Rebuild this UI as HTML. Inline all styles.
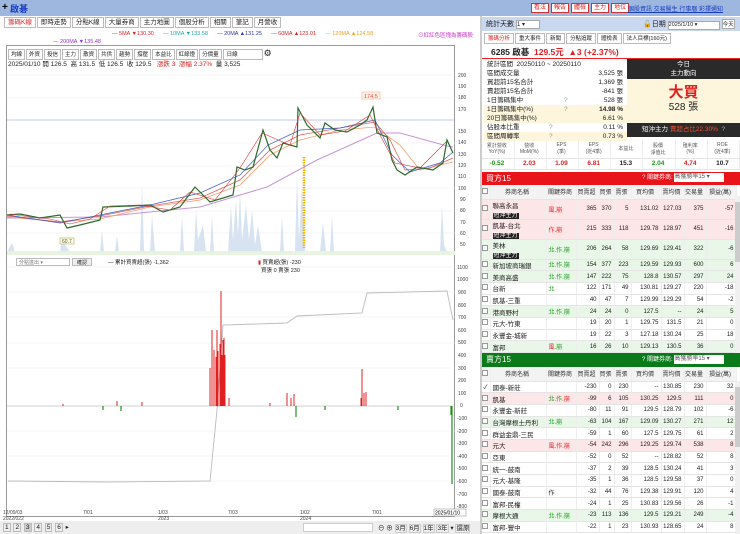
<!DOCTYPE html>
<html><head><meta charset="utf-8">
<style>
*{box-sizing:border-box;margin:0;padding:0}
body{width:740px;height:534px;overflow:hidden;background:#fff;font-family:"Liberation Sans","Noto Sans CJK TC",sans-serif;font-size:7px;color:#222;position:relative}
.a{position:absolute}
.top{left:0;top:0;width:740px;height:16px;background:#9db7df}
.tab{display:inline-block;border:1px solid #bbb;background:#fff;padding:0 3px;height:11px;line-height:10px;font-size:6.5px;margin-right:1px}
.btn{display:inline-block;border:1px solid #c33;background:#fff;color:#d22;padding:0 2px;height:10px;line-height:9px;font-size:6px;margin-right:2px}
table{border-collapse:collapse;table-layout:fixed;position:absolute;left:482px;width:254px}
td{font-size:6px;height:11.7px;border-bottom:1px solid #e5e5e5;border-right:1px solid #eee;text-align:right;padding-right:2px;white-space:nowrap;overflow:hidden}
td.n{text-align:left;padding-left:2px;font-size:6.5px}
td.k{text-align:left;padding-left:2px}
tr.p td{background:#fde6e8}tr.g td{background:#e8f7e8}
tr.h td{background:#f3f3f3;text-align:center;height:14px;color:#333}
.cb{width:6px;height:6px;border:1px solid #999;display:inline-block;background:#fff}
.dz{background:#222;color:#fff;padding:0 1px;font-size:6px}
.r{color:#e02020}.gr{color:#1a9a1a}
.st div{height:9px;line-height:9px;font-size:6.5px;position:relative;padding-left:3px}
.st span{position:absolute;right:4px}
</style></head><body>
<div class="a top"></div>
<div class="a" style="left:2px;top:2px;font-size:10px;color:#000;font-weight:bold">+</div>
<div class="a" style="left:10px;top:2px;font-size:9px;color:#1a3fc0;font-weight:bold">啟碁</div>
<div class="a" style="left:531px;top:3px;white-space:nowrap"><span class="btn">看法</span><span class="btn">報告</span><span class="btn">體檢</span><span class="btn">主力</span><span class="btn">地位</span></div>
<div class="a" style="left:628px;top:4px;font-size:6px;color:#1a3fc0;text-decoration:underline;white-space:nowrap">個股資訊 交易醫生 行事曆 彩擇通知</div>

<!-- left tabs -->
<div class="a" style="left:4px;top:17px;white-space:nowrap"><span class="tab" style="color:#d22">籌碼K線</span><span class="tab">即時走勢</span><span class="tab">分點K線</span><span class="tab">大量券商</span><span class="tab">主力地圖</span><span class="tab">個股分析</span><span class="tab">相關</span><span class="tab">筆記</span><span class="tab">月營收</span></div>
<div class="a" style="left:112px;top:31px;font-size:5.5px;white-space:nowrap"><span class="r">— 5MA ▼130.30</span>&nbsp;&nbsp;&nbsp;&nbsp;&nbsp; <span style="color:#2aa">— 10MA ▼133.58</span>&nbsp;&nbsp;&nbsp;&nbsp;&nbsp; <span style="color:#33a">— 20MA ▲131.25</span>&nbsp;&nbsp;&nbsp;&nbsp;&nbsp; <span class="r">— 60MA ▲123.01</span>&nbsp;&nbsp;&nbsp;&nbsp;&nbsp; <span style="color:#e9a020">— 120MA ▲124.58</span></div>
<div class="a" style="left:418px;top:31px;font-size:5.5px;color:#c3c;white-space:nowrap">⊙紅紅色區塊為籌碼股</div>
<div class="a" style="left:53px;top:39px;font-size:5.5px;color:#93c">— 200MA ▼135.48</div>
<div class="a" style="left:6px;top:45px;width:449px;height:472px;border:1px solid #999"></div>
<div class="a" style="left:8px;top:48px;white-space:nowrap"><span class="tab" style="font-size:5.5px;padding:0 2px">均線</span><span class="tab" style="font-size:5.5px;padding:0 2px">外資</span><span class="tab" style="font-size:5.5px;padding:0 2px">投信</span><span class="tab" style="font-size:5.5px;padding:0 2px">主力</span><span class="tab" style="font-size:5.5px;padding:0 2px">散資</span><span class="tab" style="font-size:5.5px;padding:0 2px">共供</span><span class="tab" style="font-size:5.5px;padding:0 2px">趨勢</span><span class="tab" style="font-size:5.5px;padding:0 2px">撐壓</span><span class="tab" style="font-size:5.5px;padding:0 2px">本益比</span><span class="tab" style="font-size:5.5px;padding:0 2px">紅綠燈</span><span class="tab" style="font-size:5.5px;padding:0 2px">分價量</span><span class="tab" style="font-size:5.5px;width:40px">日線</span><span style="font-size:9px">⚙</span></div>
<div class="a" style="left:8px;top:58px;font-size:6.5px;white-space:nowrap">2025/01/10 開 126.5 &nbsp;高 131.5 &nbsp;低 126.5 &nbsp;收 129.5 &nbsp;&nbsp;<span class="r">漲跌 3 &nbsp;漲幅 2.37%</span> &nbsp;量 3,525</div>

<svg class="a" style="left:0;top:0" width="480" height="534">
<g stroke="#eee" stroke-width="0.6">
<line x1="7" y1="75" x2="455" y2="75"/><line x1="7" y1="98" x2="455" y2="98"/><line x1="7" y1="143" x2="455" y2="143"/><line x1="7" y1="166" x2="455" y2="166"/><line x1="7" y1="188" x2="455" y2="188"/><line x1="7" y1="211" x2="455" y2="211"/><line x1="7" y1="233" x2="455" y2="233"/>
<line x1="7" y1="267" x2="455" y2="267"/><line x1="7" y1="292" x2="455" y2="292"/><line x1="7" y1="317" x2="455" y2="317"/><line x1="7" y1="343" x2="455" y2="343"/><line x1="7" y1="368" x2="455" y2="368"/><line x1="7" y1="431" x2="455" y2="431"/><line x1="7" y1="456" x2="455" y2="456"/><line x1="7" y1="481" x2="455" y2="481"/>
</g>
<line x1="7" y1="120" x2="455" y2="120" stroke="#aab4dd" stroke-width="0.7"/>
<path d="M7 252 L12 243 L15 252 L60 252 L62 240 L70 252 L100 252 L102 230 L104 252 L115 252 L117 235 L119 252 L140 252 L142 183 L144 252 L150 252 L152 215 L155 252 L180 252 L182 215 L184 252 L194 252 L196 210 L198 240 L203 225 L206 252 L210 252 L212 215 L214 252 L228 252 L231 205 L233 240 L236 200 L238 235 L240 190 L242 240 L246 205 L249 240 L252 210 L255 245 L258 225 L262 252 L270 252 L280 252 L282 215 L284 252 L295 252 L297 175 L299 240 L302 185 L305 252 L320 252 L323 222 L326 252 L330 252 L332 215 L334 252 L440 252 L442 205 L444 245 L447 252 Z" fill="#d7e3f0"/>
<polyline fill="none" stroke="#c596d6" stroke-width="1" points="7,218 100,217 200,207 267,187 317,160 377,133 400,133 447,146 453,147"/>
<polyline fill="none" stroke="#f0a070" stroke-width="0.8" points="7,217 60,222 100,219 150,207 200,200 240,185 270,155 300,140 340,130 375,127 400,145 420,170 440,165 453,162"/>
<polyline fill="none" stroke="#e06060" stroke-width="0.8" points="7,216 60,222 100,216 150,206 200,198 240,180 270,150 300,135 340,128 375,122 390,140 405,170 430,168 453,158"/>
<polyline fill="none" stroke="#4060c0" stroke-width="0.7" points="7,215 60,223 100,215 150,205 200,193 240,175 268,145 300,130 340,128 375,120 392,155 410,172 440,163 453,152"/>
<polyline fill="none" stroke="#2a6a2a" stroke-width="1.2" points="7,215 20,214 40,218 60,215 67,228 80,225 100,220 103,207 130,206 150,205 163,212 180,207 195,187 205,197 210,202 233,195 237,167 245,170 253,167 263,130 270,150 277,158 283,143 297,147 298,108 307,125 320,138 325,123 335,130 347,132 360,125 367,120 373,107 377,133 387,137 392,160 397,170 405,175 417,167 433,170 443,163 447,140 453,153"/>
<polyline fill="none" stroke="#d33" stroke-width="0.6" points="10,214 30,217 50,219 70,224 90,219 110,206 140,205 170,210 190,192 215,200 240,168 262,133 290,145 300,113 320,135 345,131 370,115 380,135 395,163 420,168 446,142"/>
<line x1="304" y1="157" x2="304" y2="248" stroke="#f5b000" stroke-width="2.5" stroke-dasharray="1.5 1"/>
<rect x="60" y="238" width="14" height="6" fill="#ffffe0" stroke="#cc9"/><text x="62" y="243" font-size="5" fill="#555">60.7</text>
<rect x="362" y="92" width="18" height="7" fill="#fff3e6" stroke="#fcb"/><text x="364" y="98" font-size="5.5" fill="#e44">174.5</text>
<rect x="7" y="251" width="448" height="4" fill="#e8f4e0"/>
<g font-size="5" fill="#444">
<text x="458" y="77">200</text><text x="458" y="88">190</text><text x="458" y="99">180</text><text x="458" y="111">170</text><text x="458" y="133">150</text><text x="458" y="144">140</text><text x="458" y="156">130</text><text x="458" y="167">120</text><text x="458" y="178">110</text><text x="458" y="190">100</text><text x="460" y="201">90</text><text x="460" y="212">80</text><text x="460" y="224">70</text><text x="460" y="235">60</text><text x="460" y="246">50</text>
<text x="457" y="269">1100</text><text x="457" y="281">1000</text><text x="458" y="294">900</text><text x="458" y="307">800</text><text x="458" y="319">700</text><text x="458" y="332">600</text><text x="458" y="344">500</text><text x="458" y="357">400</text><text x="458" y="370">300</text><text x="458" y="382">200</text><text x="458" y="395">100</text><text x="460" y="407">0</text><text x="457" y="420">-100</text><text x="457" y="433">-200</text><text x="457" y="445">-300</text><text x="457" y="458">-400</text><text x="457" y="470">-500</text><text x="457" y="483">-600</text><text x="457" y="496">-700</text><text x="457" y="508">-800</text>
<text x="3" y="514">12/09/03</text><text x="3" y="520">2022/022</text><text x="83" y="514">7/01</text><text x="158" y="514">1/03</text><text x="158" y="520">2023</text><text x="228" y="514">7/03</text><text x="300" y="514">1/02</text><text x="300" y="520">2024</text><text x="372" y="514">7/01</text>
</g>
<rect x="434" y="509" width="32" height="7" fill="#fff" stroke="#888" stroke-width="0.5"/><text x="435" y="514.5" font-size="5">2025/01/10</text>
<polyline fill="none" stroke="#bbb" stroke-width="0.9" points="8,481 107,482 210,481 217,410 223,325 287,323 297,316 362,313 367,293 447,291 453,320"/>
<line x1="7" y1="406" x2="452" y2="406" stroke="#888" stroke-width="0.4"/>
<path d="M210 406V368M212 406V330M214 406V350M216 406V357M217 406V330M218 406V351M220 406V344M221 406V291M222 406V355M223 406V340M224 406V338M225 406V355M229 406V398M287 406V393M291 406V398M294 406V394M361 406V398M362 406V369M364 406V393M366 406V392M117 406V401M142 406V402M63 406V404M270 406V403" stroke="#e02020" stroke-width="1"/>
<path d="M296 406V417M121 406V411M103 406V410M452 406V484M451 406V415M398 406V410M325 406V410" stroke="#209020" stroke-width="1.2"/>
</svg>
<div class="a" style="left:16px;top:258px;width:54px;height:8px;border:1px solid #bbb;font-size:5px;color:#777;padding-left:2px">分點進出 ▾</div>
<div class="a" style="left:72px;top:258px;width:20px;height:8px;background:#eee;border:1px solid #bbb;font-size:5px;text-align:center">確認</div>
<div class="a" style="left:108px;top:258px;font-size:5.5px;white-space:nowrap">— 累計買賣超(張) -1,362</div>
<div class="a" style="left:258px;top:258px;font-size:5.5px;white-space:nowrap"><span class="r">▮</span> 買賣超(張) -230<br>&nbsp;&nbsp;買張 0 賣張 230</div>
<div class="a" style="left:0;top:521px;width:480px;height:13px;background:#eee"></div>
<div class="a" style="left:3px;top:523px;font-size:6.5px;word-spacing:1px;white-space:nowrap"><span style="border:1px solid #bbb;padding:0 1px">1</span> <span style="border:1px solid #bbb;padding:0 1px">2</span> <span style="border:1px solid #bbb;padding:0 1px;background:#ccc">3</span> <span style="border:1px solid #bbb;padding:0 1px">4</span> <span style="border:1px solid #bbb;padding:0 1px">5</span> <span style="border:1px solid #bbb;padding:0 1px">6</span> ▸</div>
<div class="a" style="left:303px;top:523px;width:70px;height:9px;background:#fff;border:1px solid #ccc"></div>
<div class="a" style="left:378px;top:522px;font-size:6.5px;white-space:nowrap">⊖ ⊕ <span style="border:1px solid #ccc">3月</span> <span style="border:1px solid #ccc">6月</span> <span style="border:1px solid #ccc">1年</span> <span style="border:1px solid #ccc">3年</span> ▾ <span style="border:1px solid #ccc">還原</span></div>
<div class="a" style="left:480px;top:16px;width:2px;height:518px;background:#ccc"></div>

<!-- right -->
<div class="a" style="left:482px;top:17px;width:258px;height:14px;background:#c9d8ee"></div>
<div class="a" style="left:486px;top:19px;font-size:7px;white-space:nowrap">統計天數 <span style="display:inline-block;width:24px;height:9px;background:#fff;border:1px solid #aaa;font-size:6px">1 ▾</span></div>
<div class="a" style="left:643px;top:19px;font-size:7px;white-space:nowrap">🔓日期 <span style="display:inline-block;width:52px;height:9px;background:#fff;border:1px solid #aaa;font-size:5.5px">2025/1/10 ▾</span> <span style="display:inline-block;border:1px solid #aaa;background:#fff;font-size:5.5px">今天</span></div>
<div class="a" style="left:484px;top:33px;white-space:nowrap"><span class="tab" style="color:#d22;font-size:5.5px">籌碼分析</span><span class="tab" style="font-size:5.5px">重大事件</span><span class="tab" style="font-size:5.5px">新聞</span><span class="tab" style="font-size:5.5px">分點追蹤</span><span class="tab" style="font-size:5.5px">體檢表</span><span class="tab" style="font-size:5.5px">法人目標(160元)</span></div>
<div class="a" style="left:482px;top:44px;width:258px;height:15px;border-bottom:1.5px solid #e22"></div>
<div class="a" style="left:491px;top:46px;font-size:8.5px;font-weight:bold;white-space:nowrap">6285 啟碁 &nbsp;<span class="r">129.5元 &nbsp;▲3 (+2.37%)</span></div>
<div class="a st" style="left:484px;top:60px;width:143px">
<div>統計區間 &nbsp;20250110 ~ 20250110</div>
<div>區間成交量<span>3,525 張</span></div>
<div>買超前15名合計<span>1,369 張</span></div>
<div>賣超前15名合計<span>-841 張</span></div>
<div>1日籌碼集中 <b style="color:#999;font-weight:normal;position:absolute;left:80px">?</b><span>528 張</span></div>
<div style="background:#fdf6dc">1日籌碼集中(%) <b style="color:#999;font-weight:normal;position:absolute;left:80px">?</b><span style="font-weight:bold">14.98 %</span></div>
<div style="background:#fdf6dc">20日籌碼集中(%)<span>6.61 %</span></div>
<div>佔股本比重 <b style="color:#999;font-weight:normal;position:absolute;left:65px">?</b><span>0.11 %</span></div>
<div style="background:#fdf6dc">區間周轉率 <b style="color:#999;font-weight:normal;position:absolute;left:65px">?</b><span>0.73 %</span></div>
</div>
<div class="a" style="left:627px;top:59px;width:113px;height:20px;background:#2a2a2a;color:#fff;text-align:center;font-size:6.5px;line-height:9px;padding-top:1px">今日<br>主力動向</div>
<div class="a" style="left:627px;top:79px;width:113px;height:44px;background:#fdf6dc;text-align:center"><div style="color:#e02020;font-size:15px;font-weight:bold;line-height:18px;margin-top:5px">大買</div><div style="font-size:10px;line-height:11px">528 張</div></div>
<div class="a" style="left:627px;top:123px;width:113px;height:14px;background:#2a2a2a;color:#fff;font-size:6.5px;line-height:14px;padding-left:15px;white-space:nowrap">短沖主力 <span style="color:#f05030">賣超占比22.30%</span> &nbsp;<span style="color:#aaa">?</span></div>
<div class="a" style="left:482px;top:140px;width:258px;height:32px">
<table style="left:0;width:258px"><tr style="height:18px">
<td style="text-align:center;color:#555;font-size:5px;height:18px">累計營收<br>YoY(%)</td><td style="text-align:center;color:#555;font-size:5px">營收<br>MoM(%)</td><td style="text-align:center;color:#555;font-size:5px">EPS<br>(季)</td><td style="text-align:center;color:#555;font-size:5px">EPS<br>(近4季)</td><td style="text-align:center;color:#555;font-size:5px">本益比</td><td style="text-align:center;color:#555;font-size:5px">股價<br>淨值比</td><td style="text-align:center;color:#555;font-size:5px">殖利率<br>(%)</td><td style="text-align:center;color:#555;font-size:5px">ROE<br>(近4季)</td></tr>
<tr style="font-weight:bold"><td class="gr" style="text-align:center;font-size:6.5px">-0.52</td><td class="r" style="text-align:center;font-size:6.5px">2.03</td><td class="r" style="text-align:center;font-size:6.5px">1.09</td><td class="r" style="text-align:center;font-size:6.5px">6.81</td><td style="text-align:center;font-size:6.5px">15.3</td><td class="gr" style="text-align:center;font-size:6.5px">2.04</td><td class="r" style="text-align:center;font-size:6.5px">4.74</td><td style="text-align:center;font-size:6.5px">10.7</td></tr></table></div>

<div class="a" style="left:482px;top:172px;width:258px;height:13px;background:#e8141a;color:#fff;font-size:8px;line-height:13px;padding-left:4px">買方15<span style="position:absolute;left:160px;font-size:6px;white-space:nowrap">? 關鍵券商: <span style="display:inline-block;background:#fff;color:#555;width:50px;height:9px;line-height:9px;vertical-align:middle">高獲勝率15 ▾</span></span></div>
<table style="top:185px">
<colgroup><col style="width:8px"><col style="width:56px"><col style="width:30px"><col style="width:23px"><col style="width:15px"><col style="width:17px"><col style="width:30px"><col style="width:23px"><col style="width:22px"><col style="width:30px"></colgroup>
<tr class="h"><td><span class="cb"></span></td><td>券商名稱</td><td>關鍵券商</td><td>買賣超</td><td>買張</td><td>賣張</td><td>買均價</td><td>賣均價</td><td>交易量</td><td>損益(萬)</td></tr>
<tr class="p"><td style="height:18px"><span class="cb"></span></td><td class="n">聯高永昌<br><span class="dz">短沖主力</span></td><td class="k r">風.崩</td><td>365</td><td>370</td><td>5</td><td>131.02</td><td>127.03</td><td>375</td><td>-57</td></tr>
<tr class="p"><td style="height:18px"><span class="cb"></span></td><td class="n">凱基-台北<br><span class="dz">短沖主力</span></td><td class="k r">作.崩</td><td>215</td><td>333</td><td>118</td><td>129.78</td><td>128.97</td><td>451</td><td>-16</td></tr>
<tr class="g"><td style="height:18px"><span class="cb"></span></td><td class="n">美林<br><span class="dz">短沖主力</span></td><td class="k gr">北.作.崩</td><td>206</td><td>264</td><td>58</td><td>129.69</td><td>129.41</td><td>322</td><td>-6</td></tr>
<tr class="g"><td><span class="cb"></span></td><td class="n">新加坡商瑞銀</td><td class="k gr">北.作.崩</td><td>154</td><td>377</td><td>223</td><td>129.59</td><td>129.93</td><td>600</td><td>6</td></tr>
<tr class="g"><td><span class="cb"></span></td><td class="n">美商高盛</td><td class="k gr">北.作.崩</td><td>147</td><td>222</td><td>75</td><td>128.8</td><td>130.57</td><td>297</td><td>24</td></tr>
<tr><td><span class="cb"></span></td><td class="n">台新</td><td class="k gr">北</td><td>122</td><td>171</td><td>49</td><td>130.81</td><td>129.27</td><td>220</td><td>-18</td></tr>
<tr><td><span class="cb"></span></td><td class="n">凱基-三重</td><td></td><td>40</td><td>47</td><td>7</td><td>129.99</td><td>129.29</td><td>54</td><td>-2</td></tr>
<tr class="g"><td><span class="cb"></span></td><td class="n">港商野村</td><td class="k gr">北.作.崩</td><td>24</td><td>24</td><td>0</td><td>127.5</td><td>--</td><td>24</td><td>5</td></tr>
<tr><td><span class="cb"></span></td><td class="n">元大-竹東</td><td></td><td>19</td><td>20</td><td>1</td><td>129.75</td><td>131.5</td><td>21</td><td>0</td></tr>
<tr><td><span class="cb"></span></td><td class="n">永豐金-城新</td><td></td><td>19</td><td>22</td><td>3</td><td>127.18</td><td>130.24</td><td>25</td><td>18</td></tr>
<tr class="g"><td><span class="cb"></span></td><td class="n">富邦</td><td class="k r">風.<span class="gr">崩</span></td><td>16</td><td>26</td><td>10</td><td>129.13</td><td>130.5</td><td>36</td><td>0</td></tr>
<tr><td><span class="cb"></span></td><td class="n">顯邦-光華</td><td></td><td>12</td><td>12</td><td>0</td><td>131.08</td><td>--</td><td>12</td><td>-2</td></tr>
</table>
<div class="a" style="left:482px;top:353px;width:258px;height:14px;background:#0a7a1a;color:#fff;font-size:8px;line-height:14px;padding-left:4px">賣方15<span style="position:absolute;left:160px;font-size:6px;white-space:nowrap">? 關鍵券商: <span style="display:inline-block;background:#fff;color:#555;width:50px;height:9px;line-height:9px;vertical-align:middle">高獲勝率15 ▾</span></span></div>
<table style="top:367px">
<colgroup><col style="width:8px"><col style="width:56px"><col style="width:30px"><col style="width:23px"><col style="width:15px"><col style="width:17px"><col style="width:30px"><col style="width:23px"><col style="width:22px"><col style="width:30px"></colgroup>
<tr class="h"><td><span class="cb"></span></td><td>券商名稱</td><td>關鍵券商</td><td>買賣超</td><td>買張</td><td>賣張</td><td>買均價</td><td>賣均價</td><td>交易量</td><td>損益(萬)</td></tr>
<tr><td>✓</td><td class="n">國泰-新莊</td><td></td><td>-230</td><td>0</td><td>230</td><td>--</td><td>130.85</td><td>230</td><td>32</td></tr>
<tr class="p"><td><span class="cb"></span></td><td class="n">凱基</td><td class="k gr">北.作.<span class="r">崩</span></td><td>-99</td><td>6</td><td>105</td><td>130.25</td><td>129.5</td><td>111</td><td>0</td></tr>
<tr><td><span class="cb"></span></td><td class="n">永豐金-新莊</td><td></td><td>-80</td><td>11</td><td>91</td><td>129.5</td><td>128.79</td><td>102</td><td>-6</td></tr>
<tr class="g"><td><span class="cb"></span></td><td class="n">台灣摩根士丹利</td><td class="k gr">北.崩</td><td>-63</td><td>104</td><td>167</td><td>129.09</td><td>130.27</td><td>271</td><td>12</td></tr>
<tr><td><span class="cb"></span></td><td class="n">群益金鼎-三民</td><td></td><td>-59</td><td>1</td><td>60</td><td>127.5</td><td>129.75</td><td>61</td><td>2</td></tr>
<tr class="p"><td><span class="cb"></span></td><td class="n">元大</td><td class="k r">風.作.崩</td><td>-54</td><td>242</td><td>296</td><td>129.25</td><td>129.74</td><td>538</td><td>8</td></tr>
<tr><td><span class="cb"></span></td><td class="n">亞東</td><td></td><td>-52</td><td>0</td><td>52</td><td>--</td><td>128.82</td><td>52</td><td>8</td></tr>
<tr><td><span class="cb"></span></td><td class="n">統一-鼓南</td><td></td><td>-37</td><td>2</td><td>39</td><td>128.5</td><td>130.24</td><td>41</td><td>3</td></tr>
<tr><td><span class="cb"></span></td><td class="n">元大-基隆</td><td></td><td>-35</td><td>1</td><td>36</td><td>128.5</td><td>129.58</td><td>37</td><td>0</td></tr>
<tr><td><span class="cb"></span></td><td class="n">國泰-鼓南</td><td class="k">作</td><td>-32</td><td>44</td><td>76</td><td>129.38</td><td>129.91</td><td>120</td><td>4</td></tr>
<tr><td><span class="cb"></span></td><td class="n">富邦-民權</td><td></td><td>-24</td><td>1</td><td>25</td><td>130.83</td><td>129.56</td><td>26</td><td>-1</td></tr>
<tr class="g"><td><span class="cb"></span></td><td class="n">摩根大通</td><td class="k gr">北.作.崩</td><td>-23</td><td>113</td><td>136</td><td>129.5</td><td>129.21</td><td>249</td><td>-4</td></tr>
<tr><td><span class="cb"></span></td><td class="n">富邦-豐中</td><td></td><td>-22</td><td>1</td><td>23</td><td>130.93</td><td>128.65</td><td>24</td><td>8</td></tr>
</table>
<div class="a" style="left:735px;top:196px;width:5px;height:157px;background:#f0f0f0"><div style="margin-top:6px;height:60px;background:#ccc"></div></div>
<div class="a" style="left:735px;top:381px;width:5px;height:153px;background:#f0f0f0"><div style="margin-top:6px;height:60px;background:#ccc"></div></div>
</body></html>
